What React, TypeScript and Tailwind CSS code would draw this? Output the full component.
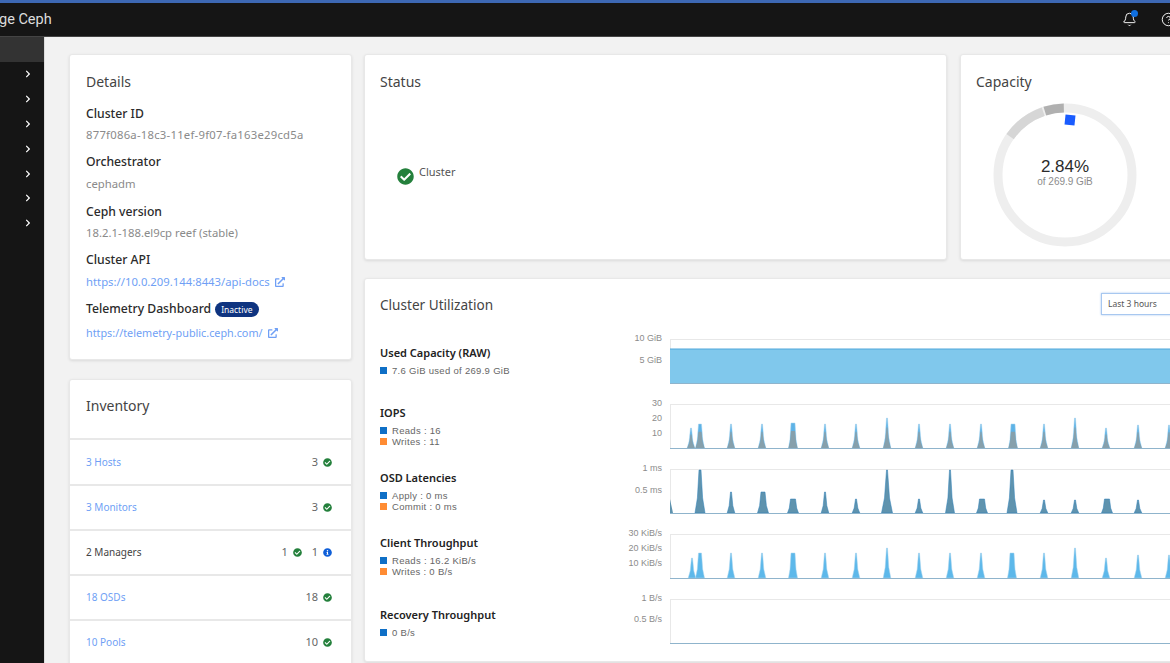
import { Bell, CircleHelp } from 'lucide-react'
import { FaCheckCircle, FaChevronRight, FaExternalLinkAlt, FaInfoCircle } from 'react-icons/fa'

type Peak = [number, number, number?, number?]

const iopsPeaks: Peak[] = [
  [691, 428], [700, 424, 4.5, 1.5], [731, 424], [762, 424], [793, 423, 4.5, 2], [825, 424], [856, 424], [887, 418],
  [919, 424], [950, 424], [981, 424], [1013, 424, 4.5, 2], [1044, 424], [1075, 418], [1106, 428], [1138, 425], [1169, 425],
]
const latencyPeaks: Peak[] = [
  [700, 470, 5, 1], [731, 492], [763, 492, 5.5, 2], [793, 499, 5.5, 2.5], [825, 492], [856, 499], [887, 470, 5.5, 0.5],
  [919, 499], [950, 470, 4.5, 0.5], [982, 499, 5.5, 2.5], [1012, 470, 5, 1], [1044, 500], [1075, 500], [1107, 499, 5.5, 2.5], [1138, 500],
]
const clientPeaks: Peak[] = [
  [692, 559], [700, 554, 4.5, 1.5], [731, 554], [762, 554], [793, 554, 4.5, 2], [825, 554], [856, 554], [887, 549],
  [919, 554], [950, 554], [981, 554], [1012, 554, 4.5, 2], [1044, 554], [1075, 549], [1106, 559], [1138, 556], [1169, 556],
]

// page coords -> svg coords: chart svg starts at x=620, each row at its own top
function peakPath(peaks: Peak[], rowTop: number, scale = 1) {
  const bottom = 54
  return peaks
    .map(([x, top, w = 3.8, a = 0.5]) => {
      const px = x - 620
      const py = bottom - (bottom - (top - rowTop)) * scale
      const mid = bottom - (bottom - py) * 0.35
      const m = a + (w - a) * 0.4
      return `M${px - w} ${bottom}L${px - m} ${mid}L${px - a} ${py}L${px + a} ${py}L${px + m} ${mid}L${px + w} ${bottom}Z`
    })
    .join('')
}

function Chart({ ticks, children }: { ticks: [string, number][]; children?: React.ReactNode }) {
  return (
    <svg width="570" height="65" className="shrink-0 block">
      <line x1="50" y1="10.5" x2="570" y2="10.5" stroke="#e8e8e8" />
      <line x1="50.5" y1="10" x2="50.5" y2="55" stroke="#e8e8e8" />
      {children}
      <line x1="50" y1="54.5" x2="570" y2="54.5" stroke="#8fb4cc" />
      {ticks.map(([label, y]) => (
        <text key={label} x="42" y={y + 3} textAnchor="end" fontSize="9" fill="#8c8c8c" fontFamily="'Liberation Sans', sans-serif">
          {label}
        </text>
      ))}
    </svg>
  )
}

function Legend({ color, text }: { color: string; text: string }) {
  return (
    <div className="flex items-center h-[11px] text-[9.5px] tracking-[0.3px] text-[#666] font-['Liberation_Sans',sans-serif]">
      <span className={`w-[7px] h-[7px] mr-[5px] shrink-0 ${color}`} />
      <span className="block h-[11px] leading-[11px]">{text}</span>
    </div>
  )
}

function MetricRow({ title, legend, chart, className = '' }: { title: string; legend: [string, string][]; chart: React.ReactNode; className?: string }) {
  return (
    <div className="flex items-center h-[65px]">
      <div className={`w-[255px] shrink-0 pl-[15px] ${className}`}>
        <div className="text-[11px] leading-[14px] font-semibold text-[#222] mb-[5px]">{title}</div>
        {legend.map(([color, text]) => (
          <Legend key={text} color={color} text={text} />
        ))}
      </div>
      {chart}
    </div>
  )
}

function InventoryRow({ label, link, first, children }: { label: string; link?: boolean; first?: boolean; children: React.ReactNode }) {
  return (
    <div className={`flex items-center justify-between ${first ? 'h-[46px]' : 'h-[45px]'} border-t-2 border-[#e8e8e8] pl-[16px] pr-[19px] text-[10px]`}>
      <span className={link ? 'text-[#6f9ff5]' : 'text-[#444]'}>{label}</span>
      <div className="flex items-center text-[#666] text-[11px]">{children}</div>
    </div>
  )
}

function Ok() {
  return <FaCheckCircle size={9} className="ml-[5px] text-[#24803c]" />
}

function DetailLabel({ className, children }: { className: string; children: React.ReactNode }) {
  return <div className={`text-[12.2px] leading-[16px] font-medium text-[#2b2b2b] ${className}`}>{children}</div>
}

function DetailValue({ className, children }: { className: string; children: React.ReactNode }) {
  return <div className={`text-[11.3px] leading-[16px] text-[#8a8a8a] ${className}`}>{children}</div>
}

function polar(angle: number) {
  const r = 67
  const rad = (angle * Math.PI) / 180
  return `${75 + r * Math.sin(rad)} ${75 - r * Math.cos(rad)}`
}

function Donut() {
  return (
    <svg width="150" height="150" className="block ml-[29px] mt-[8px]">
      <circle cx="75" cy="75" r="67" fill="none" stroke="#eeeeee" strokeWidth="9" />
      <path d={`M${polar(-55)}A67 67 0 0 1 ${polar(-19)}`} fill="none" stroke="#d6d6d6" strokeWidth="9" />
      <path d={`M${polar(-17.5)}A67 67 0 0 1 ${polar(-1)}`} fill="none" stroke="#b0b0b0" strokeWidth="9" />
      <rect x="75" y="15" width="10" height="10" fill="#1a5cff" transform="rotate(6 80 20)" />
      <text x="75" y="72" textAnchor="middle" fontSize="17" fill="#2b2b2b" fontFamily="'Liberation Sans', sans-serif">2.84%</text>
      <text x="75" y="85" textAnchor="middle" fontSize="10" fill="#8c8c8c" fontFamily="'Liberation Sans', sans-serif">of 269.9 GiB</text>
    </svg>
  )
}

export default function App() {
  const card = 'bg-white border border-[#e8e8e8] rounded-[3px] shadow-[0_1px_3px_rgba(0,0,0,0.1)]'
  return (
    <div className="w-[1170px] h-[663px] overflow-hidden flex flex-col bg-[#f2f2f2] font-['Noto_Sans',sans-serif]">
      <header className="h-[37px] shrink-0 flex items-center justify-between bg-[#151515] border-t-[3px] border-t-[#3d68b4] border-b border-b-[#444]">
        <span className="text-[14.5px] text-[#dddddd] -ml-[1px] font-['Roboto',sans-serif]">ge Ceph</span>
        <div className="flex items-center gap-[24px] -mr-[6px]">
          <div className="relative">
            <Bell size={15} className="text-white" strokeWidth={1.5} />
            <span className="absolute -top-[2px] right-[-1px] w-[7px] h-[7px] rounded-full bg-[#0f6fe0]" />
          </div>
          <CircleHelp size={15} className="text-white" strokeWidth={1.5} />
        </div>
      </header>
      <div className="flex flex-1 min-h-0">
        <aside className="w-[45px] shrink-0 bg-[#151515] border-r border-[#ddd]">
          <div className="h-[25px] bg-[#333333]" />
          {[0, 1, 2, 3, 4, 5, 6].map((i) => (
            <div key={i} className="h-[24.8px] flex items-center justify-end pr-[12px]">
              <FaChevronRight size={8} className="text-white" />
            </div>
          ))}
        </aside>
        <main className="flex gap-[12px] pl-[24px] pt-[17px]">
          <div className="w-[283px] shrink-0 flex flex-col gap-[19px]">
            <section className={`${card} h-[306px] px-[16px] pt-[17px] shrink-0`}>
              <h2 className="text-[14px] leading-[20px] text-[#444]">Details</h2>
              <DetailLabel className="mt-[14px]">Cluster ID</DetailLabel>
              <DetailValue className="mt-[5px] tracking-[0.24px]">877f086a-18c3-11ef-9f07-fa163e29cd5a</DetailValue>
              <DetailLabel className="mt-[11px]">Orchestrator</DetailLabel>
              <DetailValue className="mt-[6px]">cephadm</DetailValue>
              <DetailLabel className="mt-[12px]">Ceph version</DetailLabel>
              <DetailValue className="mt-[5px]">18.2.1-188.el9cp reef (stable)</DetailValue>
              <DetailLabel className="mt-[11px]">Cluster API</DetailLabel>
              <DetailValue className="mt-[6px] flex items-center gap-[5px] !text-[#6f9ff5]">
                https://10.0.209.144:8443/api-docs <FaExternalLinkAlt size={10} />
              </DetailValue>
              <DetailLabel className="mt-[11px] flex items-center gap-[4px]">
                Telemetry Dashboard
                <span className="bg-[#0f3480] text-white text-[8.5px] leading-[15px] h-[15px] px-[6px] rounded-full font-normal">Inactive</span>
              </DetailLabel>
              <DetailValue className="mt-[8px] flex items-center gap-[5px] !text-[#6f9ff5] !text-[10.8px]">
                https://telemetry-public.ceph.com/ <FaExternalLinkAlt size={10} />
              </DetailValue>
            </section>
            <section className={`${card} h-[300px] shrink-0`}>
              <h2 className="h-[58px] px-[16px] pb-[7px] flex items-center text-[14px] text-[#444]">Inventory</h2>
              <InventoryRow label="3 Hosts" link first>3<Ok /></InventoryRow>
              <InventoryRow label="3 Monitors" link>3<Ok /></InventoryRow>
              <InventoryRow label="2 Managers">
                1<Ok />
                <span className="ml-[10px]">1</span>
                <FaInfoCircle size={9} className="ml-[5px] text-[#0f5fd8]" />
              </InventoryRow>
              <InventoryRow label="18 OSDs" link>18<Ok /></InventoryRow>
              <InventoryRow label="10 Pools" link>10<Ok /></InventoryRow>
            </section>
          </div>
          <div className="w-[820px] shrink-0 flex flex-col gap-[18px]">
            <div className="flex gap-[13px] h-[206px] shrink-0">
              <section className={`${card} w-[583px] shrink-0 px-[15px] pt-[17px]`}>
                <h2 className="text-[14px] leading-[20px] text-[#444]">Status</h2>
                <div className="flex items-start ml-[17px] mt-[72px]">
                  <FaCheckCircle size={17} className="text-[#24803c] mt-[4px]" />
                  <span className="text-[11px] leading-[16px] text-[#555] ml-[5px]">Cluster</span>
                </div>
              </section>
              <section className={`${card} flex-1 pt-[17px]`}>
                <h2 className="text-[14px] leading-[20px] text-[#444] pl-[15px]">Capacity</h2>
                <Donut />
              </section>
            </div>
            <section className={`${card} h-[384px] shrink-0`}>
              <div className="flex items-center justify-between h-[50px] pt-[2px] pl-[15px] pr-[2px]">
                <h2 className="text-[13.6px] text-[#444]">Cluster Utilization</h2>
                <div className="w-[80px] h-[22px] -mt-[2px] bg-white border border-[#a8c8f0] shadow-[0_0_2px_#a8c8f0] pl-[6px] flex items-center text-[8.5px] text-[#555]">
                  Last 3 hours
                </div>
              </div>
              <MetricRow
                title="Used Capacity (RAW)"
                className="-mt-[2px]"
                legend={[['bg-[#0f6fc6]', '7.6 GiB used of 269.9 GiB']]}
                chart={
                  <Chart ticks={[['10 GiB', 9], ['5 GiB', 31]]}>
                    <rect x="50" y="20" width="520" height="34" fill="#80c8ec" />
                    <line x1="50" y1="20" x2="570" y2="20" stroke="#4ea6da" />
                  </Chart>
                }
              />
              <MetricRow
                title="IOPS"
                legend={[['bg-[#0f6fc6]', 'Reads : 16'], ['bg-[#ff8c33]', 'Writes : 11']]}
                chart={
                  <Chart ticks={[['30', 9], ['20', 24], ['10', 39]]}>
                    <path d={peakPath(iopsPeaks, 394)} fill="#5db2e6" stroke="#a8d4ee" strokeWidth="0.5" />
                    <path d={peakPath(iopsPeaks, 394, 0.68)} fill="#86a0ac" />
                  </Chart>
                }
              />
              <MetricRow
                title="OSD Latencies"
                legend={[['bg-[#0f6fc6]', 'Apply : 0 ms'], ['bg-[#ff8c33]', 'Commit : 0 ms']]}
                chart={
                  <Chart ticks={[['1 ms', 9], ['0.5 ms', 31]]}>
                    <path d="M50 40L53 54L50 54Z" fill="#5f93ae" />
                    <path d={peakPath(latencyPeaks, 459)} fill="#5f93ae" stroke="#2a7fb8" strokeWidth="0.5" />
                  </Chart>
                }
              />
              <MetricRow
                title="Client Throughput"
                legend={[['bg-[#0f6fc6]', 'Reads : 16.2 KiB/s'], ['bg-[#ff8c33]', 'Writes : 0 B/s']]}
                chart={
                  <Chart ticks={[['30 KiB/s', 9], ['20 KiB/s', 24], ['10 KiB/s', 39]]}>
                    <path d={peakPath(clientPeaks, 525)} fill="#5db8ea" stroke="#a8d4ee" strokeWidth="0.5" />
                  </Chart>
                }
              />
              <MetricRow
                title="Recovery Throughput"
                className="pt-[3px]"
                legend={[['bg-[#0f6fc6]', '0 B/s']]}
                chart={<Chart ticks={[['1 B/s', 9], ['0.5 B/s', 30]]} />}
              />
            </section>
          </div>
        </main>
      </div>
    </div>
  )
}
